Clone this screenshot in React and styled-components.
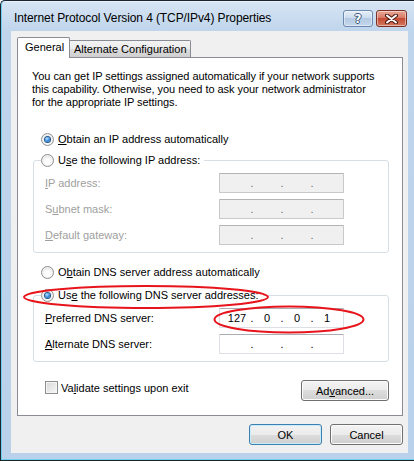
import React from 'react';
import styled, { createGlobalStyle } from 'styled-components';

const GlobalStyle = createGlobalStyle`
    html, body {
        margin: 0;
        padding: 0;
        background: #fff;
    }

    body {
        font-family: "Liberation Sans", Arial, sans-serif;
        font-size: 11px;
        color: #000;
    }
`;

const Window = styled.div`
    position: relative;
    box-sizing: border-box;
    display: flex;
    flex-direction: column;
    width: 414px;
    height: 461px;
    padding: 0 6px 7px 10px;
    border: 1px solid #1b2430;
    border-right: none;
    border-top-left-radius: 5px;
    background: linear-gradient(#d7e5f4, #bfd5ec 30px, #b9d1ea);
    box-shadow: inset 1px 0 0 #6fd0ee, inset 0 -1px 0 #6fd0ee, inset 0 1px 0 #e9f2fb;
`;

const TitleBar = styled.div`
    display: flex;
    align-items: flex-start;
    height: 30px;
    padding-left: 3px;
`;

const Title = styled.div`
    flex: 1;
    margin-top: 10px;
    font-size: 12px;
    letter-spacing: -0.1px;
    color: #000;
`;

const CaptionButton = styled.div`
    box-sizing: border-box;
    display: flex;
    justify-content: center;
    align-items: center;
    width: ${p => p.w}px;
    height: 17px;
    margin-top: 9px;
    border: 1px solid ${p => (p.close ? '#7a2f22' : '#6a89ad')};
    border-radius: 3px;
    background: ${p =>
        p.close
            ? 'linear-gradient(#eaa897, #d67a66 45%, #c44a33 50%, #d37a60)'
            : 'linear-gradient(#e6eef8, #ccdcee 45%, #b4c9e2 50%, #c4d7ec)'};
    box-shadow: inset 0 0 0 1px rgba(255, 255, 255, 0.45);
`;

const HelpGlyph = styled.span`
    font-family: "DejaVu Sans", sans-serif;
    font-weight: bold;
    font-size: 12px;
    line-height: 1;
    color: #fff;
    text-shadow: 1px 0 0 #3d5677, -1px 0 0 #3d5677, 0 1px 0 #3d5677, 0 -1px 0 #3d5677;
`;

const CaptionButtons = styled.div`
    display: flex;
    gap: 3px;
    margin-right: 1px;
`;

const Content = styled.div`
    display: flex;
    flex-direction: column;
    flex: 1;
    padding: 6px 5px 0 6px;
    background: #f0f0f0;
`;

const Tabs = styled.div`
    display: flex;
    align-items: flex-start;
    height: 21px;
`;

const Tab = styled.div`
    box-sizing: border-box;
    position: relative;
    display: flex;
    align-items: center;
    border: 1px solid #898c95;
    border-bottom: none;
    ${p =>
        p.active
            ? `
        z-index: 1;
        width: 53px;
        height: 21px;
        padding: 0 0 2px 7px;
        background: #fff;
        border-radius: 2px 2px 0 0;
    `
            : `
        width: 122px;
        height: 17px;
        margin: 3px 0 0 -1px;
        padding: 0 0 1px 4px;
        background: linear-gradient(#f3f3f3, #ebebeb 50%, #dddddd 50%, #cfcfcf);
        border-radius: 0 2px 0 0;
    `}
`;

const Panel = styled.div`
    box-sizing: border-box;
    display: flex;
    flex-direction: column;
    height: 359px;
    margin-top: -1px;
    padding: 12px 13px 0 15px;
    border: 1px solid #898c95;
    background: #fff;
`;

const Description = styled.p`
    margin: 0 0 0 -1px;
    line-height: 13px;
    letter-spacing: -0.05px;
`;

const RadioRow = styled.label`
    display: flex;
    align-items: center;
    gap: 4px;
    height: 16px;
    margin-top: ${p => p.mt || 0}px;
    padding-left: 8px;
`;

const Legend = styled.label`
    display: flex;
    align-items: center;
    align-self: flex-start;
    gap: 4px;
    height: 16px;
    margin: -9px 0 0 -4px;
    padding-right: 4px;
    background: #fff;
`;

const RadioCircle = styled.span`
    box-sizing: border-box;
    display: flex;
    justify-content: center;
    align-items: center;
    width: 13px;
    height: 13px;
    border: 1px solid #8e8f8f;
    border-radius: 50%;
    background: radial-gradient(circle at 50% 60%, #fdfdfd 30%, #e4e4e4 70%, #cfcfcf);
    box-shadow: inset 0 0 0 1px #f4f4f4;

    &::after {
        content: '';
        display: ${p => (p.checked ? 'block' : 'none')};
        width: 5px;
        height: 5px;
        border-radius: 50%;
        background: radial-gradient(circle at 40% 35%, #b4e4ff, #3b8ee0 50%, #0f4d92);
        box-shadow: 0 0 0 1px #24578d;
    }
`;

const Key = styled.u`
    text-decoration: underline;
    text-underline-offset: 1px;
`;

const Group = styled.div`
    display: flex;
    flex-direction: column;
    margin-top: ${p => p.mt}px;
    padding: 0 0 7px 11px;
    border: 1px solid #d5dfe5;
    border-radius: 3px;
`;

const FieldRow = styled.div`
    display: grid;
    grid-template-columns: 174px 125px;
    align-items: center;
    height: 20px;
    margin-top: ${p => p.mt}px;
    color: ${p => (p.disabled ? '#a0a0a0' : '#000')};
`;

const IpBox = styled.div`
    box-sizing: border-box;
    display: flex;
    align-items: center;
    width: 125px;
    height: 20px;
    padding-left: 4px;
    border: 1px solid ${p => (p.disabled ? '#c9c9c9' : '#dcdfe4')};
    border-top-color: ${p => (p.disabled ? '#b4b4b4' : '#abadb3')};
    border-radius: 1px;
    background: ${p => (p.disabled ? '#f0f0f0' : '#fff')};
    color: ${p => (p.disabled ? '#6d6d6d' : '#000')};
`;

const Octet = styled.span`
    width: 26px;
    text-align: center;
`;

const Dot = styled.span`
    width: 4px;
    text-align: center;
`;

const BottomRow = styled.div`
    display: flex;
    justify-content: space-between;
    align-items: flex-start;
    margin-top: 18px;
`;

const CheckRow = styled.label`
    display: flex;
    align-items: center;
    gap: 3px;
    height: 13px;
    margin-top: 1px;
    padding-left: 12px;
`;

const CheckBox = styled.span`
    box-sizing: border-box;
    width: 13px;
    height: 13px;
    border: 1px solid #8f8f8f;
    background: linear-gradient(135deg, #d8d8d8, #f7f7f7);
    box-shadow: inset 0 0 0 1px #f4f4f4;
`;

const Button = styled.div`
    box-sizing: border-box;
    display: flex;
    justify-content: center;
    align-items: center;
    width: ${p => p.w}px;
    height: 21px;
    border: 1px solid ${p => (p.focused ? '#3c7fb1' : '#707070')};
    border-radius: 3px;
    background: linear-gradient(#f3f3f3, #ebebeb 50%, #dddddd 50%, #cfcfcf);
    box-shadow: inset 0 0 0 1px ${p => (p.focused ? '#c8ecfb' : '#fcfcfc')};
`;

const DialogButtons = styled.div`
    display: flex;
    justify-content: flex-end;
    gap: 8px;
    margin-top: 8px;
`;

const Marks = styled.svg`
    position: absolute;
    left: 0;
    top: 0;
    pointer-events: none;
`;

const IpInput = ({ value, disabled }) => {
    const parts = value ? value.split('.') : ['', '', '', ''];

    return (
        <IpBox disabled={disabled}>
            {parts.map((part, i) => (
                <React.Fragment key={i}>
                    <Octet>{part}</Octet>
                    {i < 3 && <Dot>.</Dot>}
                </React.Fragment>
            ))}
        </IpBox>
    );
};

const App = () => (
    <Window>
        <GlobalStyle />
        <TitleBar>
            <Title>Internet Protocol Version 4 (TCP/IPv4) Properties</Title>
            <CaptionButtons>
                <CaptionButton w={30}>
                    <HelpGlyph>?</HelpGlyph>
                </CaptionButton>
                <CaptionButton w={31} close>
                    <svg width="13" height="10" viewBox="0 0 13 10">
                        <path d="M2 1.5 L11 8.5 M11 1.5 L2 8.5" stroke="#4a1a12" strokeWidth="4" strokeLinecap="round" />
                        <path d="M2 1.5 L11 8.5 M11 1.5 L2 8.5" stroke="#fff" strokeWidth="2" strokeLinecap="round" />
                    </svg>
                </CaptionButton>
            </CaptionButtons>
        </TitleBar>

        <Content>
            <Tabs>
                <Tab active>General</Tab>
                <Tab>Alternate Configuration</Tab>
            </Tabs>

            <Panel>
                <Description>
                    You can get IP settings assigned automatically if your network supports
                    <br />
                    this capability. Otherwise, you need to ask your network administrator
                    <br />
                    for the appropriate IP settings.
                </Description>

                <RadioRow mt={22}>
                    <RadioCircle checked />
                    <span>
                        <Key>O</Key>btain an IP address automatically
                    </span>
                </RadioRow>

                <Group mt={13}>
                    <Legend>
                        <RadioCircle />
                        <span>
                            U<Key>s</Key>e the following IP address:
                        </span>
                    </Legend>
                    <FieldRow mt={5} disabled>
                        <span>
                            <Key>I</Key>P address:
                        </span>
                        <IpInput disabled />
                    </FieldRow>
                    <FieldRow mt={6} disabled>
                        <span>
                            S<Key>u</Key>bnet mask:
                        </span>
                        <IpInput disabled />
                    </FieldRow>
                    <FieldRow mt={6} disabled>
                        <span>
                            <Key>D</Key>efault gateway:
                        </span>
                        <IpInput disabled />
                    </FieldRow>
                </Group>

                <RadioRow mt={11}>
                    <RadioCircle />
                    <span>
                        O<Key>b</Key>tain DNS server address automatically
                    </span>
                </RadioRow>

                <Group mt={15}>
                    <Legend>
                        <RadioCircle checked />
                        <span>
                            Us<Key>e</Key> the following DNS server addresses:
                        </span>
                    </Legend>
                    <FieldRow mt={5}>
                        <span>
                            <Key>P</Key>referred DNS server:
                        </span>
                        <IpInput value="127.0.0.1" />
                    </FieldRow>
                    <FieldRow mt={6}>
                        <span>
                            <Key>A</Key>lternate DNS server:
                        </span>
                        <IpInput />
                    </FieldRow>
                </Group>

                <BottomRow>
                    <CheckRow>
                        <CheckBox />
                        <span>
                            Va<Key>l</Key>idate settings upon exit
                        </span>
                    </CheckRow>
                    <Button w={88}>
                        <span>
                            Ad<Key>v</Key>anced...
                        </span>
                    </Button>
                </BottomRow>
            </Panel>

            <DialogButtons>
                <Button w={73} focused>
                    OK
                </Button>
                <Button w={73}>Cancel</Button>
            </DialogButtons>
        </Content>

        <Marks width="414" height="461" viewBox="0 0 414 461">
            <ellipse cx="145" cy="296" rx="122" ry="11" fill="none" stroke="#e8141b" strokeWidth="2" />
            <ellipse cx="288" cy="318.5" rx="74.5" ry="13" fill="none" stroke="#e8141b" strokeWidth="2" />
        </Marks>
    </Window>
);

export default App;
